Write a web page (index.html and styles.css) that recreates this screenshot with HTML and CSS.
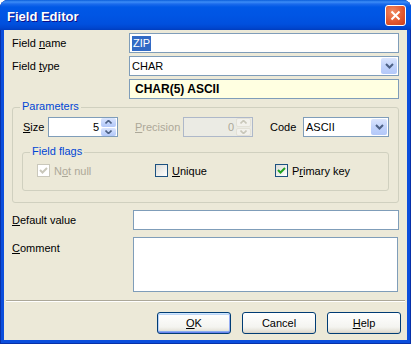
FILE: index.html
```html
<!DOCTYPE html>
<html lang="en">
  <head>
    <meta charset="UTF-8" />
    <meta name="viewport" content="width=device-width, initial-scale=1.0" />
    <title>Field Editor</title>
    <link rel="stylesheet" href="styles.css">
  </head>
  <body>
    <div class="window">
      <div class="titlebar">
        <span class="title">Field Editor</span>
        <span class="close-btn">
          <svg width="11" height="11" viewBox="0 0 11 11"><path d="M1.5 1.5 L9.5 9.5 M9.5 1.5 L1.5 9.5" stroke="#fff" stroke-width="2" fill="none"/></svg>
        </span>
      </div>

      <div class="client">
        <div class="row">
          <label class="lbl">Field <u>n</u>ame</label>
          <div class="edit wide"><span class="selected">ZIP</span></div>
        </div>

        <div class="row">
          <label class="lbl">Field <u>t</u>ype</label>
          <div class="combo wide">
            <span class="combo-text">CHAR</span>
            <span class="drop-btn">
              <svg width="9" height="6" viewBox="0 0 9 6"><path d="M1 1 L4.5 4.5 L8 1" stroke="#4d6185" stroke-width="2" fill="none"/></svg>
            </span>
          </div>
        </div>

        <div class="row">
          <span class="lbl"></span>
          <div class="info wide">CHAR(5) ASCII</div>
        </div>

        <div class="group params">
          <div class="legend">Parameters</div>
          <div class="param-row">
            <label class="lbl-size"><u>S</u>ize</label>
            <div class="spin">
              <span class="spin-val">5</span>
              <span class="spin-btns">
                <span class="spin-btn">
                  <svg width="7" height="4" viewBox="0 0 7 4"><path d="M0.5 3.5 L3.5 0.5 L6.5 3.5" stroke="#4d6185" stroke-width="1.6" fill="none"/></svg>
                </span>
                <span class="spin-btn">
                  <svg width="7" height="4" viewBox="0 0 7 4"><path d="M0.5 0.5 L3.5 3.5 L6.5 0.5" stroke="#4d6185" stroke-width="1.6" fill="none"/></svg>
                </span>
              </span>
            </div>

            <label class="lbl-prec disabled"><u>P</u>recision</label>
            <div class="spin off">
              <span class="spin-val">0</span>
              <span class="spin-btns">
                <span class="spin-btn">
                  <svg width="7" height="4" viewBox="0 0 7 4"><path d="M0.5 3.5 L3.5 0.5 L6.5 3.5" stroke="#c9c7ba" stroke-width="1.6" fill="none"/></svg>
                </span>
                <span class="spin-btn">
                  <svg width="7" height="4" viewBox="0 0 7 4"><path d="M0.5 0.5 L3.5 3.5 L6.5 0.5" stroke="#c9c7ba" stroke-width="1.6" fill="none"/></svg>
                </span>
              </span>
            </div>

            <label class="lbl-code">Code</label>
            <div class="combo code">
              <span class="combo-text">ASCII</span>
              <span class="drop-btn">
                <svg width="9" height="6" viewBox="0 0 9 6"><path d="M1 1 L4.5 4.5 L8 1" stroke="#4d6185" stroke-width="2" fill="none"/></svg>
              </span>
            </div>
          </div>

          <div class="group flags">
            <div class="legend">Field flags</div>
            <div class="check-row">
              <label class="check-item item-notnull disabled">
                <span class="box box-off">
                  <svg width="9" height="9" viewBox="0 0 9 9"><path d="M1 4 L3.5 6.5 L8 2" stroke="#c9c7ba" stroke-width="2" fill="none"/></svg>
                </span>
                <span>N<u>o</u>t null</span>
              </label>
              <label class="check-item item-unique">
                <span class="box"></span>
                <span><u>U</u>nique</span>
              </label>
              <label class="check-item">
                <span class="box">
                  <svg width="9" height="9" viewBox="0 0 9 9"><path d="M1 4 L3.5 6.5 L8 2" stroke="#21a121" stroke-width="2" fill="none"/></svg>
                </span>
                <span>P<u>r</u>imary key</span>
              </label>
            </div>
          </div>
        </div>

        <div class="row row-default">
          <label class="lbl lbl-low"><u>D</u>efault value</label>
          <div class="edit low"></div>
        </div>

        <div class="row row-comment">
          <label class="lbl lbl-low"><u>C</u>omment</label>
          <div class="edit memo"></div>
        </div>

        <div class="separator"></div>

        <div class="buttons">
          <button class="btn default"><u>O</u>K</button>
          <button class="btn">Cancel</button>
          <button class="btn"><u>H</u>elp</button>
        </div>
      </div>
    </div>
  </body>
</html>
```

FILE: styles.css
```css
body {
  margin: 0;
  background: #fff;
  font-family: "Liberation Sans", Arial, sans-serif;
  font-size: 11px;
  color: #000;
}

u {
  text-decoration-thickness: 1px;
  text-underline-offset: 1px;
}

.window {
  width: 411px;
  height: 344px;
  display: flex;
  flex-direction: column;
  background: #0b4edc;
  border-radius: 8px 8px 0 0;
  box-shadow: inset 1px 0 #0831a9, inset -1px 0 #0831a9, inset 0 -1px #0831a9;
}

.titlebar {
  height: 30px;
  display: flex;
  align-items: center;
  justify-content: space-between;
  padding: 0 5px 0 7px;
  box-sizing: border-box;
  border-radius: 8px 8px 0 0;
  background: linear-gradient(to bottom, #0a5eda 0, #3d8df7 2px, #1b6bec 4px, #0058e6 7px, #0055e4 50%, #0050de 80%, #0046cf 93%, #003dbe 100%);
}

.title {
  color: #fff;
  font-weight: bold;
  font-size: 13px;
  text-shadow: 1px 1px #0f1089;
  margin-top: 2px;
}

.close-btn {
  width: 21px;
  height: 21px;
  box-sizing: border-box;
  margin-top: 1px;
  border: 1px solid #fff;
  border-radius: 3px;
  background: radial-gradient(circle at 35% 30%, #f08a62, #e1552c 60%, #c8401c);
  display: flex;
  align-items: center;
  justify-content: center;
}

.client {
  flex: 1;
  margin: 0 4px 4px;
  background: #ece9d8;
  padding: 3px 0 0 8px;
}

/* top rows */
.row {
  display: flex;
  align-items: center;
  height: 20px;
  margin-bottom: 3px;
}

.lbl {
  width: 117px;
  flex: none;
}

.edit,
.combo,
.info,
.spin {
  height: 20px;
  box-sizing: border-box;
  border: 1px solid #7f9db9;
  background: #fff;
  display: flex;
  align-items: center;
}

.wide {
  width: 270px;
}

.edit {
  padding-left: 2px;
}

.selected {
  background: #316ac5;
  color: #fff;
  padding: 1px 1px 2px;
}

.combo .combo-text {
  flex: 1;
  padding-left: 2px;
}

.drop-btn {
  width: 16px;
  height: 16px;
  margin-right: 1px;
  border-radius: 2px;
  background: linear-gradient(to bottom, #dbe5fd, #c1d3fb 50%, #b3c8f9);
  display: flex;
  align-items: center;
  justify-content: center;
}

.info {
  background: #ffffe1;
  font-weight: bold;
  font-size: 12px;
  padding-left: 5px;
}

/* group boxes */
.group {
  border: 1px solid #d0d0bf;
  border-radius: 3px;
}

.legend {
  width: max-content;
  height: 13px;
  line-height: 13px;
  padding: 0 2px;
  background: #ece9d8;
  color: #0046d5;
}

.params {
  width: 387px;
  box-sizing: border-box;
  margin-top: 8px;
  padding: 0 9px 11px 9px;
}

.params > .legend {
  margin: -8px 0 0 -2px;
}

.param-row {
  display: flex;
  align-items: center;
  height: 20px;
  margin-top: 4px;
}

.lbl-size {
  width: 25px;
  padding-left: 1px;
}

.spin {
  width: 70px;
  justify-content: flex-end;
  padding: 0 1px 0 0;
}

.spin-val {
  padding-right: 1px;
}

.spin-btns {
  display: flex;
  flex-direction: column;
  gap: 1px;
  height: 18px;
  margin-left: 1px;
}

.spin-btn {
  width: 15px;
  flex: 1;
  border-radius: 2px;
  background: linear-gradient(to bottom, #dbe5fd, #c1d3fb 60%, #b3c8f9);
  display: flex;
  align-items: center;
  justify-content: center;
}

.spin.off {
  background: #ebebe4;
  border-color: #aeb8c9;
  color: #aca899;
}

.spin.off .spin-btn {
  background: #f2f1ec;
  border: 1px solid #e3e1d7;
  box-sizing: border-box;
}

.disabled {
  color: #aca899;
}

.lbl-prec {
  width: 48px;
  margin-left: 17px;
}

.lbl-code {
  width: 33px;
  margin-left: 17px;
}

.code {
  width: 86px;
}

.flags {
  margin-top: 15px;
  padding: 0 0 13px 14px;
}

.flags > .legend {
  margin: -8px 0 0 -7px;
}

.check-row {
  display: flex;
  align-items: center;
  height: 13px;
  margin-top: 6px;
}

.check-item {
  display: flex;
  align-items: center;
  gap: 4px;
}

.item-notnull {
  width: 118px;
}

.item-unique {
  width: 120px;
}

.box {
  width: 13px;
  height: 13px;
  box-sizing: border-box;
  border: 1px solid #1c5180;
  background: linear-gradient(135deg, #dcdcd7, #fff);
  display: flex;
  align-items: center;
  justify-content: center;
}

.box-off {
  border-color: #cac8bb;
  background: #fff;
}

/* lower rows */
.row-default {
  margin-top: 7px;
  margin-bottom: 7px;
}

.lbl-low {
  width: 121px;
}

.low {
  width: 266px;
}

.row-comment {
  height: 55px;
  align-items: flex-start;
  margin-bottom: 0;
}

.row-comment .lbl {
  padding-top: 5px;
}

.memo {
  width: 265px;
  height: 55px;
}

.separator {
  margin: 8px 2px 0 -6px;
  border-top: 1px solid #aca899;
  border-bottom: 1px solid #fff;
}

.buttons {
  display: flex;
  justify-content: flex-end;
  gap: 11px;
  margin-top: 10px;
  padding-right: 6px;
}

.btn {
  width: 74px;
  height: 22px;
  font-family: "Liberation Sans", Arial, sans-serif;
  font-size: 11px;
  color: #000;
  border: 1px solid #003c74;
  border-radius: 3px;
  background: linear-gradient(to bottom, #fff, #f4f4f0 70%, #e3e0d6 92%, #d6d0c5);
  padding: 0;
}

.btn.default {
  box-shadow: inset 0 1px #cee7ff, inset 0 -1px #6982ee, inset 1px 0 #b8d2f8, inset -1px 0 #97aef4, inset 0 2px #bcd4f6, inset 0 -2px #89adf0;
}
```
